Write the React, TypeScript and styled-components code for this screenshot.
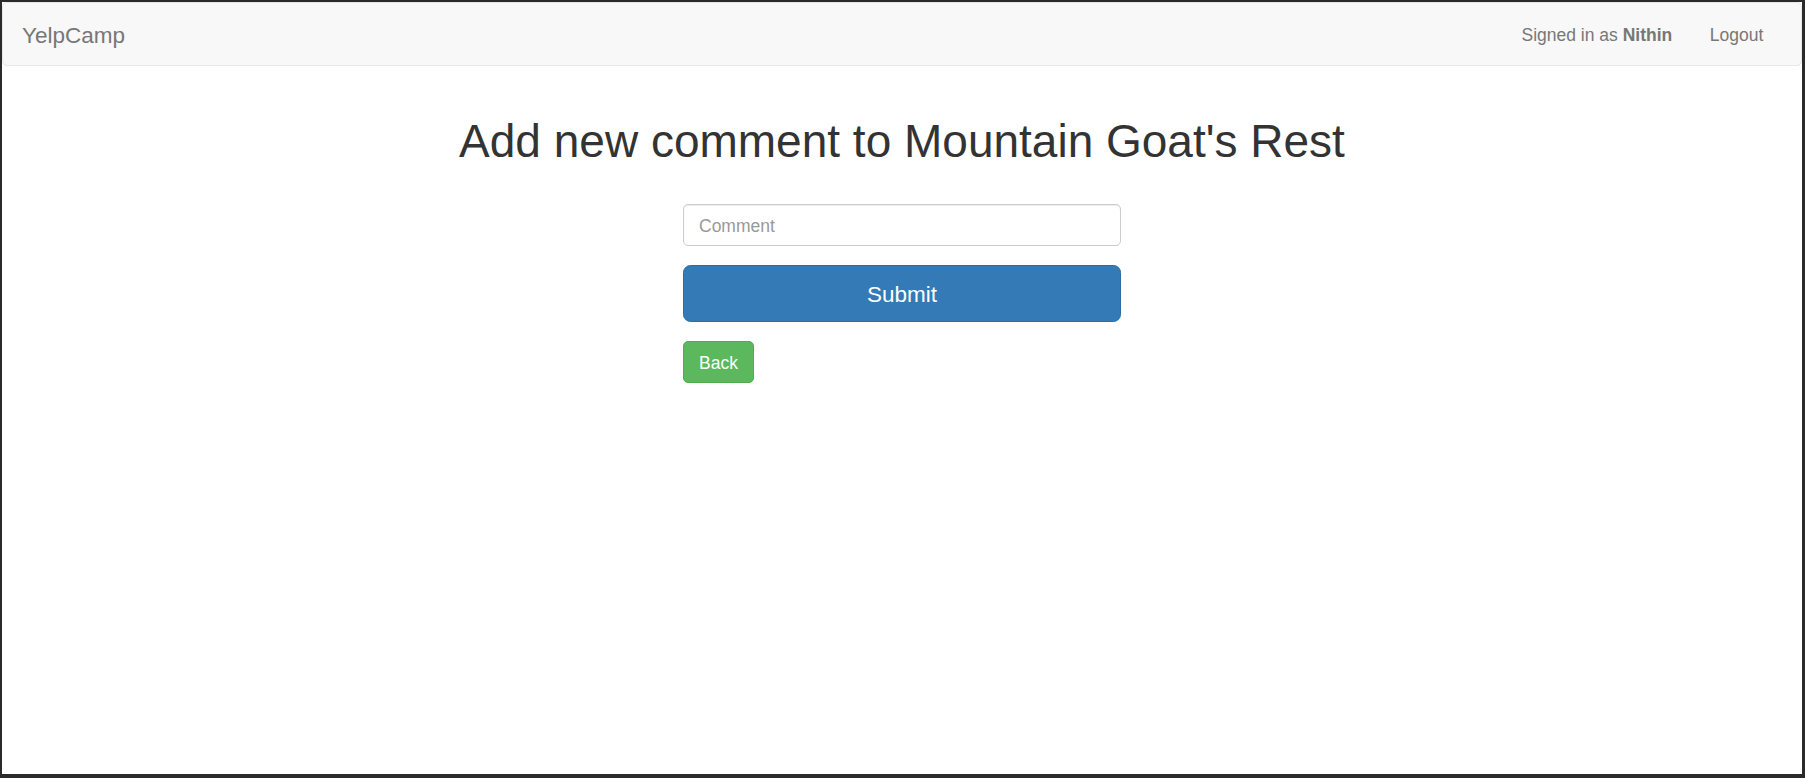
import styled, { createGlobalStyle } from 'styled-components'

const GlobalStyle = createGlobalStyle`
    html, body {
        margin: 0;
        padding: 0;
        background: #2a2a2a;
    }
    body {
        font-family: "Liberation Sans", Arial, Helvetica, sans-serif;
        font-size: 17.5px;
        color: #333;
    }
    * {
        box-sizing: border-box;
    }
`;

const Frame = styled.div`
    height: 778px;
    border-style: solid;
    border-color: #2a2a2a;
    border-width: 2px 3px 4px 2px;
    background: #fff;
    display: flex;
    flex-direction: column;
`;

const Navbar = styled.nav`
    height: 64px;
    background: #f8f8f8;
    border: 1px solid #e7e7e7;
    border-radius: 5px;
    display: flex;
    align-items: center;
    justify-content: space-between;
    padding: 2px 19px 0 0;
`;

const Brand = styled.a`
    font-size: 22.5px;
    line-height: 25px;
    color: #777;
    padding: 0 19px;
    text-decoration: none;
    cursor: pointer;
`;

const NavRight = styled.div`
    display: flex;
    align-items: center;
`;

const NavText = styled.span`
    color: #777;
    padding: 0 18.75px;
    line-height: 25px;
    strong {
        font-weight: bold;
    }
`;

const NavLink = styled.a`
    color: #777;
    padding: 0 18.75px;
    line-height: 25px;
    text-decoration: none;
    cursor: pointer;
`;

const Main = styled.main`
    display: flex;
    flex-direction: column;
    align-items: center;
`;

const Title = styled.h1`
    font-size: 46px;
    font-weight: 500;
    line-height: 50px;
    color: #333;
    margin: 50px 0 0;
    text-align: center;
`;

const Form = styled.form`
    width: 438px;
    margin-top: 38px;
    display: flex;
    flex-direction: column;
    gap: 19px;
`;

const Input = styled.input`
    width: 100%;
    height: 42px;
    padding: 9px 15px 6px;
    font-family: inherit;
    font-size: 17.5px;
    color: #555;
    border: 1px solid #ccc;
    border-radius: 5px;
    box-shadow: inset 0 1px 1px rgba(0, 0, 0, 0.075);
    outline: none;
    &::placeholder {
        color: #999;
    }
`;

const Button = styled.button<{ $variant: 'primary' | 'success'; $large?: boolean }>`
    font-family: inherit;
    font-size: ${p => (p.$large ? '22.5px' : '17.5px')};
    height: ${p => (p.$large ? '57px' : '42px')};
    width: ${p => (p.$large ? '100%' : 'auto')};
    align-self: flex-start;
    padding: ${p => (p.$large ? '3px 20px 0' : '3px 15px 0')};
    border-radius: ${p => (p.$large ? '7.5px' : '5px')};
    color: #fff;
    background: ${p => (p.$variant === 'primary' ? '#337ab7' : '#5cb85c')};
    border: 1px solid ${p => (p.$variant === 'primary' ? '#2e6da4' : '#4cae4c')};
    cursor: pointer;
`;

const App = () => {
    return (
        <>
            <GlobalStyle />
            <Frame>
                <Navbar>
                    <Brand>YelpCamp</Brand>
                    <NavRight>
                        <NavText>
                            Signed in as <strong>Nithin</strong>
                        </NavText>
                        <NavLink>Logout</NavLink>
                    </NavRight>
                </Navbar>
                <Main>
                    <Title>Add new comment to Mountain Goat's Rest</Title>
                    <Form onSubmit={e => e.preventDefault()}>
                        <Input type="text" placeholder="Comment" />
                        <Button $variant="primary" $large type="submit">Submit</Button>
                        <Button $variant="success" type="button">Back</Button>
                    </Form>
                </Main>
            </Frame>
        </>
    )
}

export default App
